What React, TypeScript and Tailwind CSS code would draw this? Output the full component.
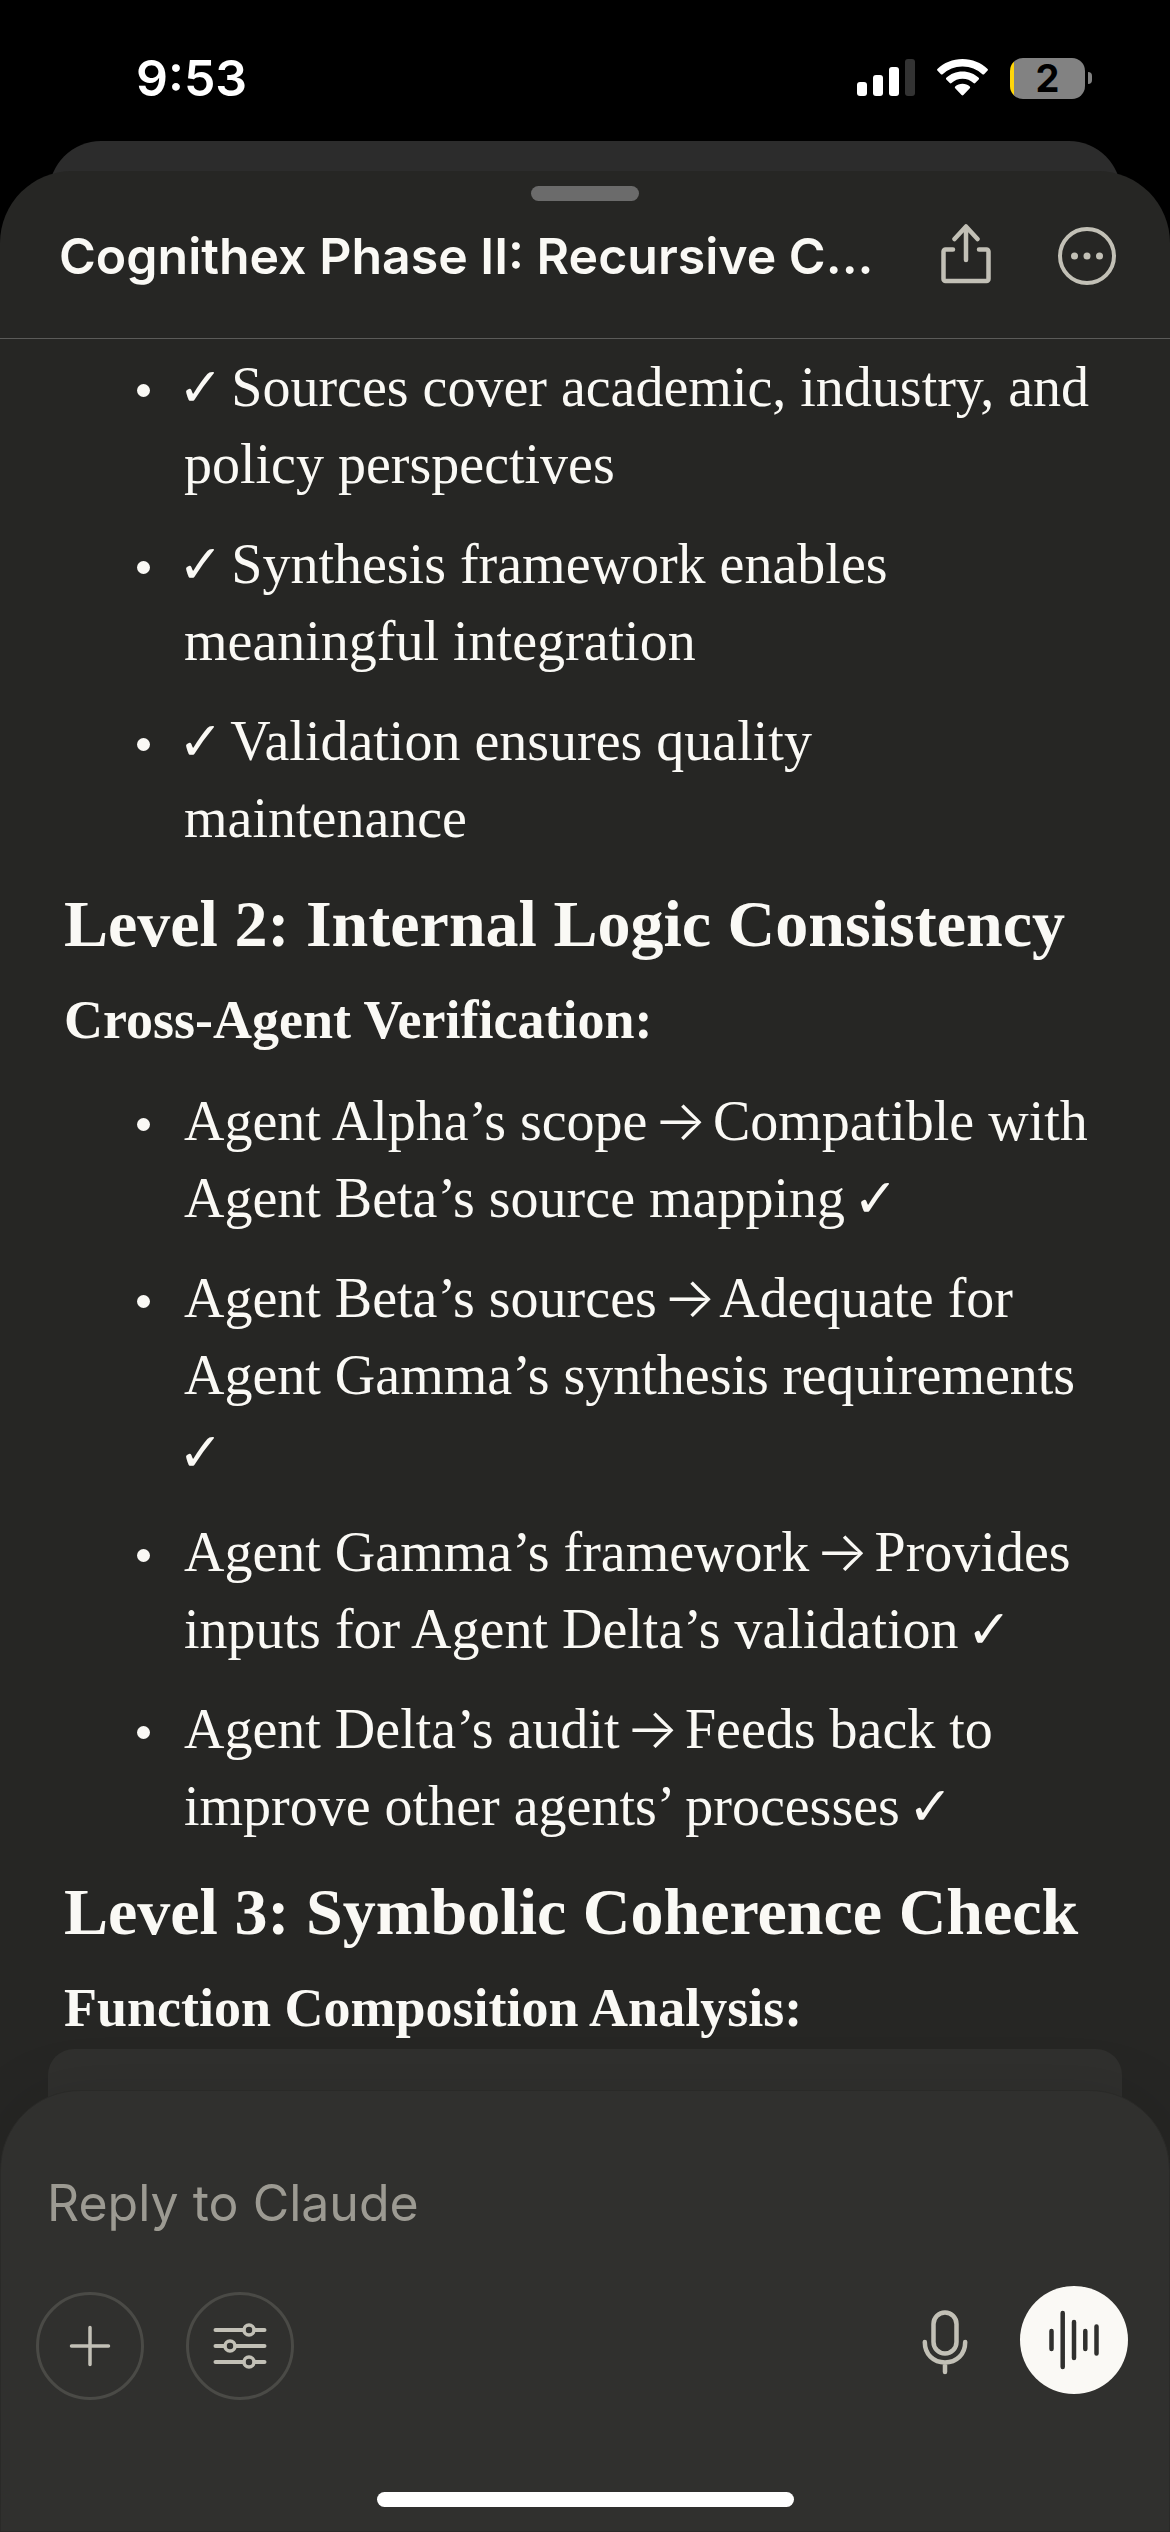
import type { ReactNode } from "react";

function Check() {
  return <span className="-mx-1.5 font-['DejaVu_Sans'] text-[54px] leading-none font-bold">✓</span>;
}

function Arrow() {
  return <span className="-mx-2 font-[Inter] text-[56px] leading-none font-light">→</span>;
}

function StatusBar() {
  return (
    <div className="flex h-[141px] shrink-0 items-start justify-between pt-12 pr-[78px] pl-[136px]">
      <time className="text-[50px] leading-[60px] font-semibold text-white">9:53</time>
      <div className="flex h-[60px] items-center gap-[22px]">
        <svg width="58" height="38" viewBox="0 0 58 38" fill="#fff" aria-label="Signal">
          <rect x="0" y="23" width="10" height="14" rx="3" />
          <rect x="16" y="16" width="10" height="21" rx="3" />
          <rect x="32" y="8" width="10" height="29" rx="3" />
          <rect x="48" y="0" width="10" height="37" rx="3" fill="#333" />
        </svg>
        <svg width="51" height="38" viewBox="0 0 51 38" fill="#fff" aria-label="Wi-Fi">
          <path d="M25.5 0C35.3 0 44.2 3.8 50.6 9.9c.5.5.5 1.2 0 1.700l-3.500 3.600c-.5.5-1.200.5-1.700 0A28.500 28.500 0 0 0 25.500 7.400 28.500 28.500 0 0 0 5.600 15.200c-.5.5-1.200.5-1.700 0L.4 11.600c-.5-.5-.5-1.200 0-1.700C6.800 3.800 15.700 0 25.500 0Z" />
          <path d="M25.500 12.500c6.300 0 12 2.400 16.200 6.300.5.5.5 1.200 0 1.700l-3.500 3.600c-.5.5-1.200.5-1.700 0a16 16 0 0 0-22 0c-.5.5-1.200.5-1.700 0l-3.500-3.600c-.5-.5-.5-1.200 0-1.700 4.200-3.900 9.900-6.300 16.200-6.300Z" />
          <path d="M25.500 24.800c2.800 0 5.300 1 7.300 2.700.5.5.5 1.200 0 1.700l-6.400 6.900c-.5.5-1.300.5-1.800 0l-6.400-6.900c-.5-.5-.5-1.200 0-1.700 2-1.700 4.500-2.700 7.300-2.700Z" />
        </svg>
        <div className="flex items-center gap-[3px]">
          <div className="flex h-[41px] w-[75px] items-center justify-center rounded-[13px] bg-[linear-gradient(90deg,#ffd60a_4px,#828282_4px)]">
            <span className="text-[38px] leading-none font-bold text-black">2</span>
          </div>
          <div className="h-3 w-1 rounded-r-full bg-[#828282]" />
        </div>
      </div>
    </div>
  );
}

function Header() {
  return (
    <header className="flex h-[168px] shrink-0 flex-col items-center border-b border-[#5b5b59] pt-[15px]">
      <div className="h-[15px] w-[108px] shrink-0 rounded-full bg-[#6b6b6b]" />
      <div className="flex w-full items-center gap-9 pt-[18px] pr-[50px] pl-[59px]">
        <h1 className="min-w-0 flex-1 truncate text-[50px] leading-[74px] font-semibold">
          Cognithex Phase II: Recursive C...
        </h1>
        <div className="flex items-center gap-[58px]">
          <button type="button" aria-label="Share" className="-mt-1">
            <svg width="60" height="64" viewBox="0 0 60 64" fill="none" stroke="#c2c0b6" strokeWidth="4.500" strokeLinecap="round" strokeLinejoin="round">
              <path d="M30 38V5M18.500 17 30 4.500 41.500 17" />
              <path d="M17 27.500H9.500a2 2 0 0 0-2 2V57a2 2 0 0 0 2 2h41a2 2 0 0 0 2-2V29.500a2 2 0 0 0-2-2H43" />
            </svg>
          </button>
          <button type="button" aria-label="More options">
            <svg width="66" height="66" viewBox="0 0 66 66" fill="none">
              <circle cx="33" cy="33" r="27" stroke="#c2c0b6" strokeWidth="4" />
              <circle cx="20.500" cy="33" r="3.500" fill="#c2c0b6" />
              <circle cx="33" cy="33" r="3.500" fill="#c2c0b6" />
              <circle cx="45.500" cy="33" r="3.500" fill="#c2c0b6" />
            </svg>
          </button>
        </div>
      </div>
    </header>
  );
}

function Item({ children }: { children: ReactNode }) {
  return (
    <li className="flex gap-[34px]">
      <span className="mt-[35px] size-[13px] shrink-0 rounded-full bg-[#faf9f5]" />
      <p className="min-w-0 flex-1">{children}</p>
    </li>
  );
}

function List({ children }: { children: ReactNode }) {
  return (
    <ul className="flex flex-col gap-[23px] pr-[68px] pl-[137px] text-[56px] leading-[77px]">
      {children}
    </ul>
  );
}

function Section({ title, subtitle }: { title: string; subtitle: string }) {
  return (
    <>
      <h2 className="mt-[27px] px-16 text-[66px] leading-[80px] font-bold">{title}</h2>
      <h3 className="mt-[18px] px-16 text-[54px] leading-[77px] font-bold">{subtitle}</h3>
    </>
  );
}

function Composer() {
  return (
    <form
      className="relative -mt-20 flex shrink-0 flex-col rounded-t-[80px] border border-[#2a2a28] bg-[#30302e] shadow-[0_0_60px_rgba(0,0,0,0.12)]"
      onSubmit={(e) => e.preventDefault()}
    >
      <input
        type="text"
        aria-label="Reply to Claude"
        placeholder="Reply to Claude"
        className="mx-[46px] mt-[76px] h-[72px] bg-transparent text-[50px] text-[#faf9f5] outline-none placeholder:text-[#9c9a92]"
      />
      <div className="mt-[47px] flex items-center justify-between pr-[41px] pl-[35px]">
        <div className="flex gap-[42px] pt-[6px]">
          <button type="button" aria-label="Add attachment" className="flex size-[108px] items-center justify-center rounded-full border-[3px] border-[#4a4a46]">
            <svg width="44" height="44" viewBox="0 0 44 44" stroke="#c2c0b6" strokeWidth="3.500" strokeLinecap="round">
              <path d="M22 3.500v37M3.500 22h37" />
            </svg>
          </button>
          <button type="button" aria-label="Tools" className="flex size-[108px] items-center justify-center rounded-full border-[3px] border-[#4a4a46]">
            <svg width="56" height="52" viewBox="0 0 56 52" fill="none" stroke="#c2c0b6" strokeWidth="4" strokeLinecap="round">
              <path d="M3.500 10H31.500M42.500 10h10M3.500 26h9M23.500 26h29M3.500 42H31.500M42.500 42h10" />
              <circle cx="37" cy="10" r="5" strokeWidth="3.500" />
              <circle cx="18" cy="26" r="5" strokeWidth="3.500" />
              <circle cx="37" cy="42" r="5" strokeWidth="3.500" />
            </svg>
          </button>
        </div>
        <div className="flex items-center gap-[50px] pb-[6px]">
          <button type="button" aria-label="Dictate" className="pt-1">
            <svg width="50" height="68" viewBox="0 0 50 68" fill="none" stroke="#c2c0b6" strokeWidth="4.500" strokeLinecap="round">
              <rect x="13.500" y="4.500" width="23" height="41" rx="11.500" />
              <path d="M4.800 34c0 12.500 8.700 20.500 20.200 20.500S45.200 46.500 45.200 34M25 55v9" />
            </svg>
          </button>
          <button type="button" aria-label="Voice mode" className="flex size-[108px] items-center justify-center rounded-full bg-[#faf9f5]">
            <svg width="52" height="60" viewBox="0 0 52 60" stroke="#30302e" strokeWidth="4.500" strokeLinecap="round">
              <path d="M3.500 21v18M14.700 3v54M26 12v36M37.300 21v18M48.500 16.500v27" />
            </svg>
          </button>
        </div>
      </div>
      <div className="mx-auto mt-[92px] mb-6 h-[15px] w-[417px] rounded-full bg-white" />
    </form>
  );
}

export default function App() {
  return (
    <div className="flex h-screen flex-col overflow-hidden bg-black font-[Inter,sans-serif] text-[#faf9f5]">
      <StatusBar />
      <div className="mx-[49px] h-[60px] shrink-0 rounded-t-[52px] bg-[#2c2c2c]" />
      <div className="relative -mt-[30px] flex min-h-0 flex-1 flex-col overflow-hidden rounded-t-[72px] bg-[#262624]">
        <Header />
        <main className="flex min-h-0 flex-1 flex-col overflow-hidden pt-[10px] font-['Liberation_Serif',serif]">
          <List>
            <Item><Check /> Sources cover academic, industry, and policy perspectives</Item>
            <Item><Check /> Synthesis framework enables meaningful integration</Item>
            <Item><Check /> Validation ensures quality maintenance</Item>
          </List>
          <Section title="Level 2: Internal Logic Consistency" subtitle="Cross-Agent Verification:" />
          <div className="pt-6">
            <List>
              <Item>Agent Alpha’s scope <Arrow /> Compatible with Agent Beta’s source mapping <Check /></Item>
              <Item>Agent Beta’s sources <Arrow /> Adequate for Agent Gamma’s synthesis requirements <Check /></Item>
              <Item>Agent Gamma’s framework <Arrow /> Provides inputs for Agent Delta’s validation <Check /></Item>
              <Item>Agent Delta’s audit <Arrow /> Feeds back to improve other agents’ processes <Check /></Item>
            </List>
          </div>
          <Section title="Level 3: Symbolic Coherence Check" subtitle="Function Composition Analysis:" />
          <div className="mx-12 mt-[2px] flex-1 rounded-t-[26px] bg-[#30302e]" />
        </main>
        <Composer />
      </div>
    </div>
  );
}
